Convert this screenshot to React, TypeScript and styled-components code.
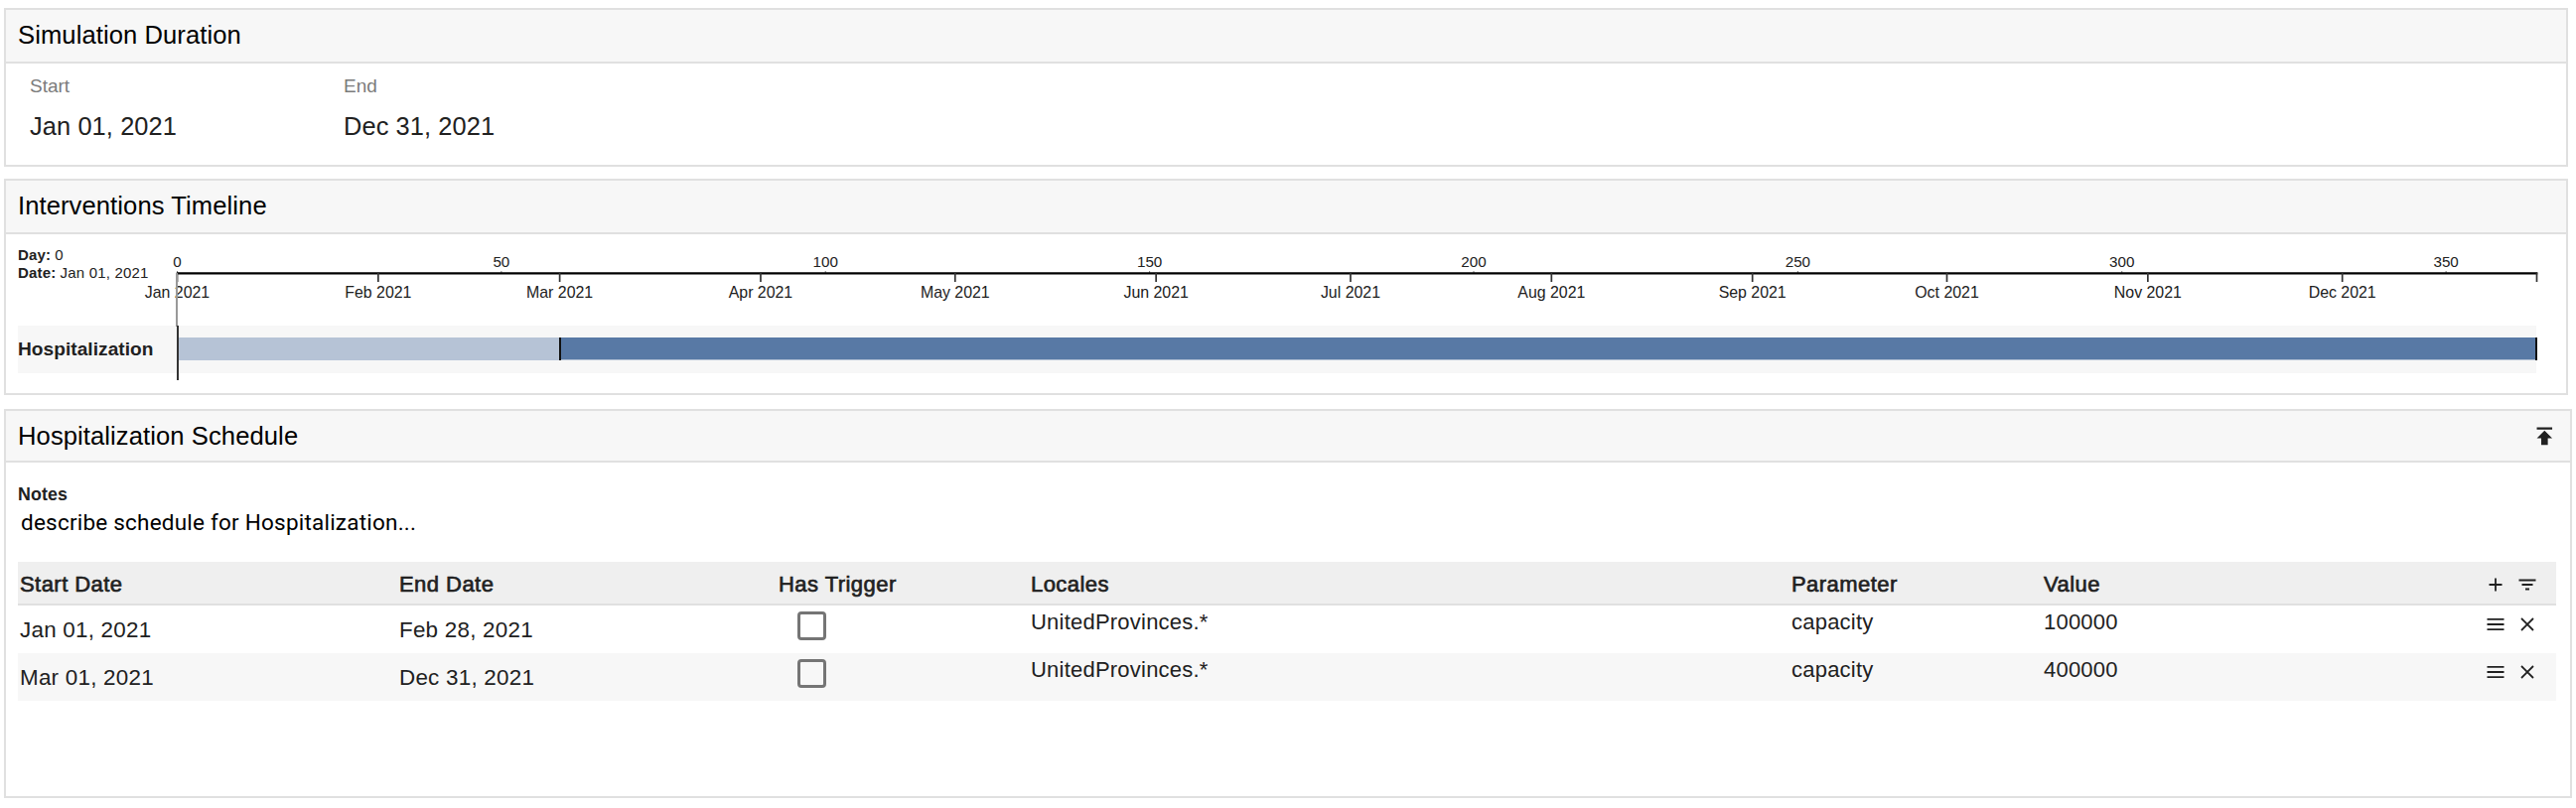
import React from 'react';
import styled, { createGlobalStyle } from 'styled-components';

const GlobalStyle = createGlobalStyle`
  *, *::before, *::after { box-sizing: border-box; }
  body {
    margin: 0;
    background: #fff;
    color: #212121;
    font-family: "Liberation Sans", Arial, Helvetica, sans-serif;
  }
`;

const Page = styled.main`
  display: flex;
  flex-direction: column;
  width: 2594px;
  height: 814px;
  padding: 8px 4px 0;
`;

const Card = styled.section<{ $width: number; $height: number; $gap?: number }>`
  display: flex;
  flex-direction: column;
  width: ${p => p.$width}px;
  height: ${p => p.$height}px;
  margin-bottom: ${p => p.$gap ?? 0}px;
  border: 2px solid #e0e0e0;
`;

const CardHeader = styled.header<{ $height: number }>`
  display: flex;
  justify-content: space-between;
  height: ${p => p.$height}px;
  padding: 0 12.5px 0 12px;
  background: #f7f7f7;
  border-bottom: 2px solid #e0e0e0;
`;

const CardTitle = styled.h2`
  margin: 0;
  color: #000;
  font-size: 25.6px;
  font-weight: 400;
  letter-spacing: 0.08px;
  line-height: 50px;
`;

const HeaderAction = styled.button`
  display: flex;
  align-items: center;
  padding: 0;
  border: 0;
  background: none;
  color: #212121;
`;

const DurationFields = styled.div`
  display: flex;
  padding: 10px 0 0 24px;
`;

const Field = styled.div`
  width: 316px;
`;

const FieldLabel = styled.div`
  color: #7b7b7b;
  font-size: 19px;
  line-height: 25px;
`;

const FieldValue = styled.div`
  margin-top: 8px;
  font-size: 25.4px;
  letter-spacing: 0.1px;
  line-height: 40px;
`;

const Timeline = styled.div`
  position: relative;
  display: flex;
  flex-direction: column;
  padding-left: 12px;
`;

const AxisRow = styled.div`
  display: flex;
  height: 92px;
`;

const Readout = styled.dl`
  width: 127px;
  margin: 0;
  padding-top: 12px;
  font-size: 15px;
  letter-spacing: 0.2px;
  line-height: 18px;
  white-space: nowrap;
`;

const ReadoutLine = styled.div`
  display: flex;
  gap: 4px;
  dt { font-weight: 700; }
  dd { margin: 0; }
`;

const AxisSvg = styled.svg`
  display: block;
  flex: none;
  overflow: visible;
  fill: #212121;
`;

const InterventionRow = styled.div`
  display: flex;
  align-items: center;
  width: 2536px;
  height: 48px;
  background: #f7f7f7;
`;

const InterventionName = styled.div`
  flex: none;
  width: 161px;
  padding-bottom: 1px;
  font-size: 19.1px;
  font-weight: 700;
  letter-spacing: 0.05px;
`;

const Track = styled.div`
  display: flex;
  flex: none;
  width: 2376px;
  height: 23px;
  margin-bottom: 1px;
  background: #b6c3d6;
`;

const Segment = styled.div<{ $days: number; $color: string }>`
  flex: ${p => p.$days} 0 0;
  height: 22px;
  background: ${p => p.$color};
`;

const SegmentEdge = styled.div`
  flex: none;
  width: 2px;
  background: #111;
`;

const Cursor = styled.div`
  position: absolute;
  top: 39px;
  left: 171px;
  width: 2px;
  height: 54px;
  background: #999;
  &::after {
    content: "";
    position: absolute;
    top: 53px;
    left: 1px;
    width: 2px;
    height: 55px;
    background: #333;
  }
`;

const ScheduleBody = styled.div`
  padding: 20px 14px 0 12px;
`;

const NotesLabel = styled.label`
  display: block;
  font-size: 17.8px;
  font-weight: 700;
  letter-spacing: 0.15px;
  line-height: 24px;
`;

const Notes = styled.p`
  margin: 0 0 25px;
  padding: 2px 0 0 3px;
  color: #000;
  font-family: Roboto, sans-serif;
  font-size: 22.5px;
  letter-spacing: 0.22px;
  line-height: 29px;
`;

const Row = styled.div<{ $shaded?: boolean }>`
  display: grid;
  grid-template-columns: 382px 382px 254px 766px 254px 443.5px 32.5px 1fr;
  height: 48px;
  padding-left: 2px;
  background: ${p => (p.$shaded ? '#f7f7f7' : '#fff')};
  font-size: 22px;
`;

const HeadRow = styled(Row)`
  height: 44px;
  background: #efefef;
  border-bottom: 2px solid #e0e0e0;
`;

const HeadCell = styled.div`
  letter-spacing: 0.45px;
  line-height: 45px;
  -webkit-text-stroke: 0.65px #212121;
`;

const DateCell = styled.div`
  font-size: 22.4px;
  letter-spacing: 0.24px;
  line-height: 49px;
`;

const Cell = styled.div`
  letter-spacing: 0.22px;
  line-height: 33px;
`;

const Checkbox = styled.div`
  width: 29px;
  height: 29px;
  margin: 6px 0 0 18.5px;
  border: 3px solid #757575;
  border-radius: 4px;
`;

const IconButton = styled.button`
  display: flex;
  align-items: flex-start;
  padding: 0;
  border: 0;
  background: none;
  color: #212121;
`;

const Glyph = styled.svg`
  display: block;
  width: 22px;
  height: 22px;
  fill: none;
  stroke: currentColor;
  stroke-width: 1.8;
`;

const HeadGlyph = styled(Glyph)`
  margin-top: 11.5px;
`;

const RowGlyph = styled(Glyph)`
  margin-top: 8px;
`;

const LAST_DAY = 364;
const AXIS_WIDTH = 2376;
const xOf = (day: number) => 33.5 + (day / LAST_DAY) * AXIS_WIDTH;

const MONTHS: [string, number][] = [
  ['Jan', 0], ['Feb', 31], ['Mar', 59], ['Apr', 90], ['May', 120], ['Jun', 151],
  ['Jul', 181], ['Aug', 212], ['Sep', 243], ['Oct', 273], ['Nov', 304], ['Dec', 334],
];
const DAYS = [0, 50, 100, 150, 200, 250, 300, 350];

const ROWS = [
  { start: 'Jan 01, 2021', end: 'Feb 28, 2021', locales: 'UnitedProvinces.*', parameter: 'capacity', value: '100000' },
  { start: 'Mar 01, 2021', end: 'Dec 31, 2021', locales: 'UnitedProvinces.*', parameter: 'capacity', value: '400000' },
];

function Axis() {
  return (
    <AxisSvg width="2420" height="92">
      {DAYS.map(d => (
        <g key={d}>
          <text x={xOf(d)} y="33" fontSize="15.2" textAnchor="middle">{d}</text>
          <path d={`M${xOf(d)} 37v2`} stroke="#777" />
        </g>
      ))}
      <path d={`M${xOf(0) - 0.5} 39.4H${xOf(LAST_DAY) + 0.8}`} stroke="#000" strokeWidth="2.1" />
      {[...MONTHS.map(m => m[1]), LAST_DAY].map(d => (
        <path key={d} d={`M${xOf(d)} 38.5V48`} stroke="#333" strokeWidth="1.7" />
      ))}
      {MONTHS.map(([name, d]) => (
        <text key={name} x={xOf(d)} y="64" fontSize="15.9" textAnchor="middle">{`${name} 2021`}</text>
      ))}
    </AxisSvg>
  );
}

export default function App() {
  return (
    <>
      <GlobalStyle />
      <Page>
        <Card $width={2582} $height={160} $gap={12}>
          <CardHeader $height={54}><CardTitle>Simulation Duration</CardTitle></CardHeader>
          <DurationFields>
            <Field>
              <FieldLabel>Start</FieldLabel>
              <FieldValue>Jan 01, 2021</FieldValue>
            </Field>
            <Field>
              <FieldLabel>End</FieldLabel>
              <FieldValue>Dec 31, 2021</FieldValue>
            </Field>
          </DurationFields>
        </Card>

        <Card $width={2582} $height={218} $gap={14}>
          <CardHeader $height={54}><CardTitle>Interventions Timeline</CardTitle></CardHeader>
          <Timeline>
            <AxisRow>
              <Readout>
                <ReadoutLine><dt>Day:</dt><dd>0</dd></ReadoutLine>
                <ReadoutLine><dt>Date:</dt><dd>Jan 01, 2021</dd></ReadoutLine>
              </Readout>
              <Axis />
            </AxisRow>
            <InterventionRow>
              <InterventionName>Hospitalization</InterventionName>
              <Track>
                <Segment $days={59} $color="#b6c3d6" />
                <SegmentEdge />
                <Segment $days={305} $color="#5879a5" />
                <SegmentEdge />
              </Track>
            </InterventionRow>
            <Cursor />
          </Timeline>
        </Card>

        <Card $width={2586} $height={392}>
          <CardHeader $height={52}>
            <CardTitle>Hospitalization Schedule</CardTitle>
            <HeaderAction aria-label="Collapse">
              <svg width="26.6" height="26.6" viewBox="0 0 24 24" fill="currentColor">
                <path d="M5 4v2h14V4H5zm0 10h4v6h6v-6h4l-7-7-7 7z" />
              </svg>
            </HeaderAction>
          </CardHeader>
          <ScheduleBody>
            <NotesLabel>Notes</NotesLabel>
            <Notes>describe schedule for Hospitalization...</Notes>
            <HeadRow>
              <HeadCell>Start Date</HeadCell>
              <HeadCell>End Date</HeadCell>
              <HeadCell>Has Trigger</HeadCell>
              <HeadCell>Locales</HeadCell>
              <HeadCell>Parameter</HeadCell>
              <HeadCell>Value</HeadCell>
              <IconButton aria-label="Add">
                <HeadGlyph viewBox="0 0 22 22"><path d="M4.5 11h13M11 4.5v13" /></HeadGlyph>
              </IconButton>
              <IconButton aria-label="Filter">
                <HeadGlyph viewBox="0 0 22 22"><path d="M2.5 6.5h17M5.5 11h11M9 15.5h4" /></HeadGlyph>
              </IconButton>
            </HeadRow>
            {ROWS.map((r, i) => (
              <Row key={r.start} $shaded={i % 2 === 1}>
                <DateCell>{r.start}</DateCell>
                <DateCell>{r.end}</DateCell>
                <div><Checkbox role="checkbox" aria-checked="false" /></div>
                <Cell>{r.locales}</Cell>
                <Cell>{r.parameter}</Cell>
                <Cell>{r.value}</Cell>
                <IconButton aria-label="Menu">
                  <RowGlyph viewBox="0 0 22 22"><path d="M2.5 5.9h17M2.5 11h17M2.5 16.1h17" /></RowGlyph>
                </IconButton>
                <IconButton aria-label="Remove">
                  <RowGlyph viewBox="0 0 22 22"><path d="M5 5l12 12M17 5L5 17" /></RowGlyph>
                </IconButton>
              </Row>
            ))}
          </ScheduleBody>
        </Card>
      </Page>
    </>
  );
}
